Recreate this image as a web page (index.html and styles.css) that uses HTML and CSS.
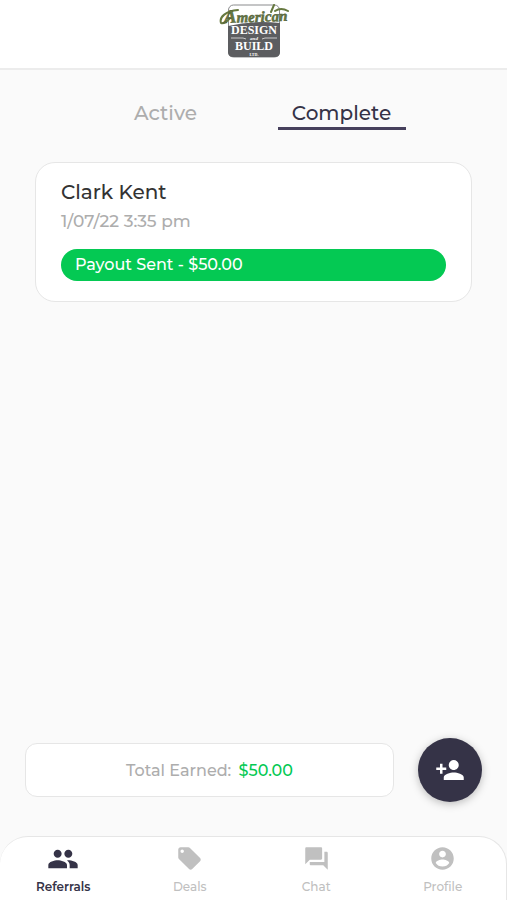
FILE: index.html
```html
<!DOCTYPE html>
<html lang="en">
<head>
    <meta charset="UTF-8">
    <meta name="viewport" content="width=device-width, initial-scale=1.0">
    <title>Referrals</title>
    <link rel="stylesheet" href="styles.css">
</head>
<body>
    <!-- Header -->
    <header class="header">
        <svg class="logo" viewBox="0 0 72 56" role="img" aria-label="American Design and Build Ltd.">
            <rect x="10.5" y="2" width="51" height="52" rx="5" fill="#fff" stroke="#8a8b8d" stroke-width="1"/>
            <path d="M10 23Q35 17 62 20V49Q62 54 57 54H15Q10 54 10 49Z" fill="#5c5d60"/>
            <path d="M3 20C1 14 8 8 20 7M3 20Q7 21 12 15M53 9L56 2M57 8Q63 4 70 8" fill="none" stroke="#66783f" stroke-width="2" stroke-linecap="round"/>
            <text x="6" y="19" class="logo-script" transform="rotate(-2 36 19)"><tspan class="logo-initial">A</tspan>merican</text>
            <text x="36" y="31" class="logo-word">DESIGN</text>
            <path d="M13 35H25L28 36M59 35H47L44 36" fill="none" stroke="#c9c9ca" stroke-width="1"/>
            <text x="36" y="37" class="logo-and">and</text>
            <text x="36" y="47" class="logo-word">BUILD</text>
            <text x="36" y="53" class="logo-ltd">LTD.</text>
        </svg>
    </header>

    <!-- Referral list -->
    <main class="content">
        <div class="tabs" role="tablist">
            <button class="tab" role="tab" aria-selected="false">Active</button>
            <button class="tab tab-active" role="tab" aria-selected="true">Complete</button>
        </div>

        <article class="card">
            <h2 class="card-name">Clark Kent</h2>
            <p class="card-date">1/07/22 3:35 pm</p>
            <p class="status">Payout Sent - $50.00</p>
        </article>
    </main>

    <!-- Total and add button -->
    <div class="summary">
        <p class="total">Total Earned: <span class="amount">$50.00</span></p>
        <button class="add-btn" aria-label="Add referral">
            <svg viewBox="0 0 24 24"><path d="M15 12c2.21 0 4-1.79 4-4s-1.79-4-4-4-4 1.79-4 4 1.79 4 4 4zm-9-2V7H4v3H1v2h3v3h2v-3h3v-2H6zm9 4c-2.67 0-8 1.34-8 4v2h16v-2c0-2.66-5.33-4-8-4z"/></svg>
        </button>
    </div>

    <!-- Bottom navigation -->
    <nav class="nav">
        <a class="nav-item nav-active" href="#referrals" aria-current="page">
            <svg class="icon-wide" viewBox="0 0 24 24"><path d="M16 11c1.66 0 2.99-1.34 2.99-3S17.66 5 16 5s-3 1.34-3 3 1.34 3 3 3zm-8 0c1.66 0 2.99-1.34 2.99-3S9.66 5 8 5 5 6.34 5 8s1.34 3 3 3zm0 2c-2.33 0-7 1.17-7 3.5V19h14v-2.5c0-2.33-4.67-3.5-7-3.5zm8 0c-.29 0-.62.02-.97.05 1.16.84 1.97 1.97 1.97 3.45V19h6v-2.5c0-2.33-4.67-3.5-7-3.5z"/></svg>
            <span>Referrals</span>
        </a>
        <a class="nav-item" href="#deals">
            <svg viewBox="0 0 24 24"><path d="M21.41 11.58l-9-9C12.05 2.22 11.55 2 11 2H4c-1.1 0-2 .9-2 2v7c0 .55.22 1.05.59 1.42l9 9c.36.36.86.58 1.41.58s1.05-.22 1.41-.59l7-7c.37-.36.59-.86.59-1.41s-.23-1.06-.59-1.42zM5.5 7C4.67 7 4 6.33 4 5.5S4.67 4 5.5 4 7 4.67 7 5.5 6.33 7 5.5 7z"/></svg>
            <span>Deals</span>
        </a>
        <a class="nav-item" href="#chat">
            <svg viewBox="0 0 24 24"><path d="M21 6h-2v9H6v2c0 .55.45 1 1 1h11l4 4V7c0-.55-.45-1-1-1zm-4 6V3c0-.55-.45-1-1-1H3c-.55 0-1 .45-1 1v14l4-4h10c.55 0 1-.45 1-1z"/></svg>
            <span>Chat</span>
        </a>
        <a class="nav-item" href="#profile">
            <svg viewBox="0 0 24 24"><path d="M12 2C6.48 2 2 6.48 2 12s4.48 10 10 10 10-4.48 10-10S17.52 2 12 2zm0 3c1.66 0 3 1.34 3 3s-1.34 3-3 3-3-1.34-3-3 1.34-3 3-3zm0 14.2c-2.5 0-4.71-1.28-6-3.22.03-1.99 4-3.08 6-3.08s5.97 1.09 6 3.08c-1.29 1.94-3.5 3.22-6 3.22z"/></svg>
            <span>Profile</span>
        </a>
    </nav>
</body>
</html>
```
FILE: styles.css
```css
:root {
    --dark: #353347;
    --green: #04c953;
    --grey: #adadad;
    --line: #e6e6e6;
}

* {
    box-sizing: border-box;
}

body {
    margin: 0;
    min-height: 100vh;
    display: flex;
    flex-direction: column;
    background: #fafafa;
    color: #333;
    font-family: Montserrat, Inter, sans-serif;
    font-weight: 500;
}

h2,
p {
    margin: 0;
    font-weight: 500;
}

button {
    font: inherit;
    border: none;
    cursor: pointer;
}

/* Header */
.header {
    display: flex;
    justify-content: center;
    padding: 3px 0 9px;
    background: #fff;
    border-bottom: 2px solid #ececec;
}

.logo {
    width: 72px;
    height: 56px;
}

.logo-script {
    font: italic bold 15px "Liberation Serif", serif;
    fill: #66783f;
    stroke: #4f5c38;
    stroke-width: 0.5px;
}

.logo-initial {
    font-size: 19px;
}

.logo-word,
.logo-and,
.logo-ltd {
    font: bold 12px "Liberation Serif", serif;
    fill: #fff;
    text-anchor: middle;
}

.logo-and {
    font-size: 5px;
    font-style: italic;
}

.logo-ltd {
    font-size: 4px;
}

/* Tabs */
.content {
    flex: 1;
    padding: 24px 35px;
}

.tabs {
    display: flex;
    justify-content: center;
    gap: 48px;
    margin-bottom: 32px;
}

.tab {
    width: 128px;
    padding: 6px 0 1px;
    background: none;
    border-bottom: 3px solid transparent;
    color: var(--grey);
    font-size: 20px;
    line-height: 26px;
}

.tab-active {
    color: var(--dark);
    border-color: #46405c;
}

/* Referral card */
.card {
    padding: 16px 25px 20px;
    background: #fff;
    border: 1px solid var(--line);
    border-radius: 20px;
}

.card-name {
    font-size: 20px;
    line-height: 26px;
}

.card-date {
    margin: 3px 0 15px;
    color: var(--grey);
    font-size: 17px;
    line-height: 26px;
}

.status {
    padding: 0 14px;
    background: var(--green);
    border-radius: 16px;
    color: #fff;
    font-size: 16px;
    line-height: 32px;
}

/* Total */
.summary {
    display: flex;
    align-items: center;
    gap: 24px;
    padding: 0 25px 34px;
}

.total {
    flex: 1;
    padding-top: 2px;
    background: #fff;
    border: 1px solid var(--line);
    border-radius: 12px;
    color: var(--grey);
    font-size: 16px;
    line-height: 50px;
    text-align: center;
}

.amount {
    margin-left: 3px;
    color: var(--green);
}

.add-btn {
    display: flex;
    align-items: center;
    justify-content: center;
    width: 64px;
    height: 64px;
    padding: 0;
    background: var(--dark);
    border-radius: 50%;
    box-shadow: 0 2px 8px rgba(0, 0, 0, 0.25);
}

.add-btn svg {
    width: 30px;
    height: 30px;
    fill: #fff;
}

/* Bottom navigation */
.nav {
    display: flex;
    padding: 6px 0 5px;
    background: #fff;
    border: 1px solid var(--line);
    border-width: 1px 1px 0 0;
    border-radius: 28px 28px 0 0;
}

.nav-item {
    flex: 1;
    display: flex;
    flex-direction: column;
    align-items: center;
    justify-content: space-between;
    height: 52px;
    padding-top: 2px;
    color: #c0c0c0;
    font-size: 12px;
    line-height: 16px;
    text-decoration: none;
}

.nav-item svg {
    width: 27px;
    height: 27px;
    fill: currentColor;
}

.nav-item .icon-wide {
    width: 32px;
    height: 32px;
}

.nav-active {
    padding-top: 0;
    color: var(--dark);
    font-weight: 600;
}
```
